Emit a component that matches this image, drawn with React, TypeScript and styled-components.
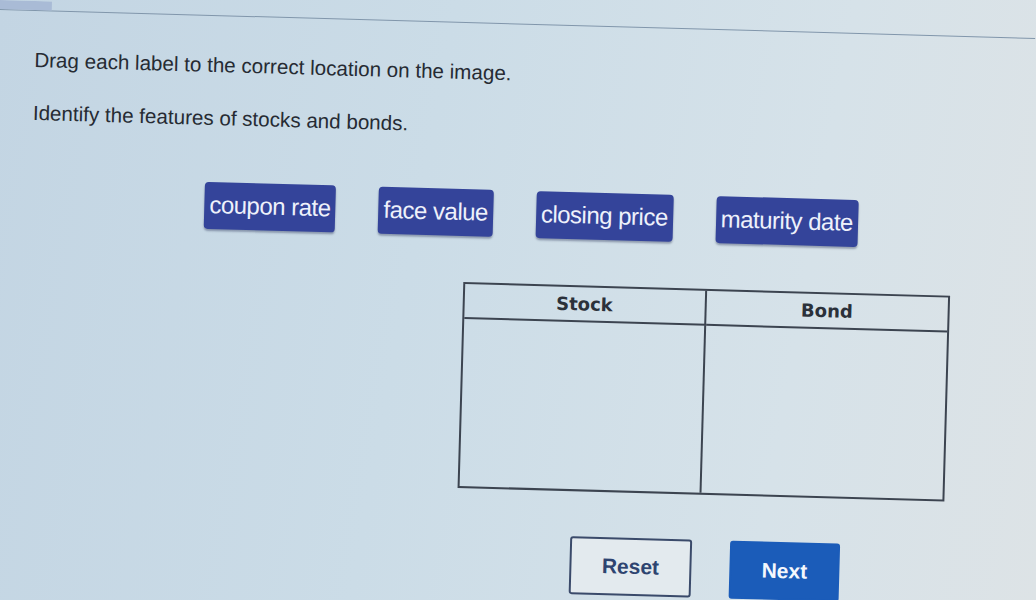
import { useState } from 'react';
import styled, { createGlobalStyle } from 'styled-components';

const GlobalStyle = createGlobalStyle`
  html, body {
    margin: 0;
    height: 100%;
    overflow: hidden;
  }
  body {
    background: linear-gradient(100deg, #c3d5e3 0%, #cbdce7 40%, #d6e2e9 75%, #dde3e6 100%);
    font-family: 'Liberation Sans', Arial, sans-serif;
  }
`;

const Page = styled.div`
  width: 1036px;
  height: 580px;
  overflow: hidden;
  transform: rotate(1.6deg);
  transform-origin: 0 0;
`;

const TopBar = styled.div`
  height: 9px;
  border-bottom: 1px solid #8196ab;
  display: flex;
`;

const Tab = styled.div`
  width: 52px;
  background: #a9bbd6;
`;

const Content = styled.div`
  padding-left: 36px;
`;

const Prompt = styled.p<{ $top: number }>`
  margin: ${(p) => p.$top}px 0 0;
  font-size: 20.6px;
  line-height: 23px;
  color: #262b33;
`;

const LabelRow = styled.div`
  display: flex;
  gap: 43px;
  margin: 53px 0 0 174px;
`;

const Label = styled.div`
  height: 45px;
  padding: 0 5px 2px;
  display: flex;
  align-items: center;
  justify-content: center;
  background: #34449a;
  border-radius: 4px;
  box-shadow: 0 2px 2px rgba(20, 30, 70, 0.35);
  color: #eef1fb;
  font-size: 24px;
  letter-spacing: -0.5px;
  white-space: nowrap;
  cursor: grab;
`;

const Table = styled.div`
  margin: 46px 0 0 435px;
  width: 487px;
  height: 206px;
  display: grid;
  grid-template-columns: 1fr 1fr;
  grid-template-rows: 35px 1fr;
  border: 2px solid #3c4450;
  box-sizing: border-box;
`;

const HeadCell = styled.div<{ $last?: boolean }>`
  display: flex;
  align-items: center;
  justify-content: center;
  font-family: 'DejaVu Sans', Verdana, sans-serif;
  font-weight: bold;
  font-size: 18px;
  color: #2b313a;
  border-bottom: 2px solid #3c4450;
  border-right: ${(p) => (p.$last ? 'none' : '2px solid #3c4450')};
`;

const DropCell = styled.div<{ $last?: boolean }>`
  border-right: ${(p) => (p.$last ? 'none' : '2px solid #3c4450')};
`;

const Buttons = styled.div`
  display: flex;
  gap: 38px;
  margin: 45px 0 0 549px;
`;

const Button = styled.button<{ $primary?: boolean }>`
  height: 58px;
  width: ${(p) => (p.$primary ? '110px' : '122px')};
  border-radius: 3px;
  font-family: 'Liberation Sans', Arial, sans-serif;
  font-weight: bold;
  font-size: 21px;
  cursor: pointer;
  background: ${(p) => (p.$primary ? '#1b5cb9' : '#e3eaee')};
  color: ${(p) => (p.$primary ? '#f4f7fd' : '#2e4470')};
  border: 2px solid ${(p) => (p.$primary ? '#1b5cb9' : '#3a4a6a')};
`;

const labels = ['coupon rate', 'face value', 'closing price', 'maturity date'];

export default function App() {
  const [pool, setPool] = useState<string[]>(labels);

  return (
    <>
      <GlobalStyle />
      <Page>
        <TopBar>
          <Tab />
        </TopBar>
        <Content>
          <Prompt $top={37}>Drag each label to the correct location on the image.</Prompt>
          <Prompt $top={30}>Identify the features of stocks and bonds.</Prompt>
          <LabelRow>
            {pool.map((l) => (
              <Label key={l}>{l}</Label>
            ))}
          </LabelRow>
          <Table>
            <HeadCell>Stock</HeadCell>
            <HeadCell $last>Bond</HeadCell>
            <DropCell />
            <DropCell $last />
          </Table>
          <Buttons>
            <Button onClick={() => setPool(labels)}>Reset</Button>
            <Button $primary>Next</Button>
          </Buttons>
        </Content>
      </Page>
    </>
  );
}
